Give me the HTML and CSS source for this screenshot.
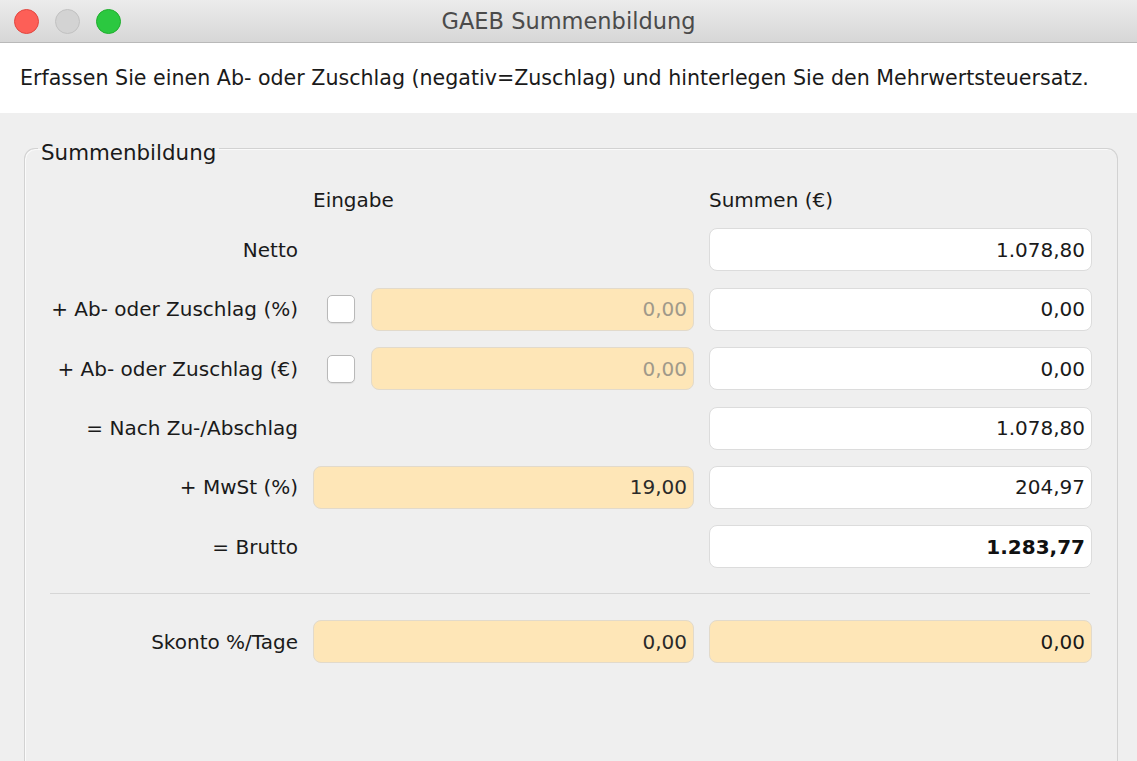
FILE: index.html
```html
<!DOCTYPE html>
<html lang="de">
<head>
<meta charset="utf-8">
<title>GAEB Summenbildung</title>
<link rel="stylesheet" href="styles.css">
</head>
<body>
<div class="window">
  <div class="titlebar">
    <div class="lights">
      <span class="light red"></span>
      <span class="light gray"></span>
      <span class="light green"></span>
    </div>
    <div class="title">GAEB Summenbildung</div>
    <div class="spacer"></div>
  </div>
  <div class="desc">Erfassen Sie einen Ab- oder Zuschlag (negativ=Zuschlag) und hinterlegen Sie den Mehrwertsteuersatz.</div>
  <div class="content">
    <fieldset class="group">
      <legend>Summenbildung</legend>
      <div class="grid">
        <div class="hdr eingabe">Eingabe</div>
        <div class="hdr summen">Summen (€)</div>

        <div class="lbl">Netto</div>
        <div class="field sum">1.078,80</div>

        <div class="lbl">+ Ab- oder Zuschlag (%)</div>
        <div class="cb"></div>
        <div class="field inp disabled">0,00</div>
        <div class="field sum">0,00</div>

        <div class="lbl">+ Ab- oder Zuschlag (€)</div>
        <div class="cb"></div>
        <div class="field inp disabled">0,00</div>
        <div class="field sum">0,00</div>

        <div class="lbl">= Nach Zu-/Abschlag</div>
        <div class="field sum">1.078,80</div>

        <div class="lbl">+ MwSt (%)</div>
        <div class="field inp wide">19,00</div>
        <div class="field sum">204,97</div>

        <div class="lbl">= Brutto</div>
        <div class="field sum bold">1.283,77</div>

        <div class="sep"></div>

        <div class="lbl">Skonto %/Tage</div>
        <div class="field inp wide">0,00</div>
        <div class="field sum orange">0,00</div>
      </div>
    </fieldset>
  </div>
</div>
</body>
</html>
```
FILE: styles.css
```css
html, body {
  margin: 0;
  padding: 0;
  height: 761px;
  overflow: hidden;
}
body {
  background: #efefef;
  font-family: "DejaVu Sans", Verdana, sans-serif;
  font-size: 20px;
  color: #1a1a1a;
}
.window {
  display: flex;
  flex-direction: column;
  height: 761px;
}
.titlebar {
  flex-shrink: 0;
  height: 42px;
  border-bottom: 1px solid #b9b9b9;
  background: linear-gradient(#ececec, #d7d7d7);
  display: grid;
  grid-template-columns: 1fr auto 1fr;
  align-items: center;
}
.lights {
  display: flex;
  gap: 16px;
  padding-left: 14px;
}
.light {
  width: 23px;
  height: 23px;
  border-radius: 50%;
  border: 1px solid transparent;
}
.light.red { background: #fd5f57; border-color: #e2463f; }
.light.gray { background: #d3d3d3; border-color: #c1c1c1; }
.light.green { background: #2bc840; border-color: #1fae2d; }
.title {
  font-size: 22.5px;
  color: #4b4b4b;
  line-height: 26px;
}
.desc {
  flex-shrink: 0;
  height: 70px;
  background: #fff;
  display: flex;
  align-items: center;
  padding-left: 20px;
  font-size: 20.6px;
  color: #1a1a1a;
}
.content {
  flex: 1;
  min-height: 0;
  display: flex;
  flex-direction: column;
  padding: 18px 19px 0 24px;
}
.group {
  flex: 1;
  min-height: 0;
  margin: 0;
  padding: 23px 24px 0 25px;
  border: 1px solid #d2d2d2;
  border-bottom: 0;
  border-radius: 11px 11px 0 0;
  box-shadow: inset 1px 1px 0 #fafafa;
}
.group legend {
  margin-left: -12px;
  padding: 10px 3px 0 3px;
  font-size: 21.4px;
  line-height: 24px;
  color: #1a1a1a;
}
.grid {
  display: grid;
  grid-template-columns: 248px 43px 323px 383px;
  column-gap: 15px;
  row-gap: 16.4px;
  align-items: center;
}
.hdr {
  line-height: 24px;
}
.eingabe { grid-column: 2 / 4; }
.summen { grid-column: 4; }
.lbl {
  grid-column: 1;
  text-align: right;
  white-space: nowrap;
}
.field {
  height: 43px;
  box-sizing: border-box;
  border-radius: 8px;
  display: flex;
  align-items: center;
  justify-content: flex-end;
  padding-right: 6px;
  white-space: nowrap;
}
.sum {
  grid-column: 4;
  background: #fff;
  border: 1px solid #dcdcdc;
}
.inp {
  grid-column: 3;
  background: #fee6b7;
  border: 1px solid #e2dacb;
  color: #2a2a2a;
}
.inp.wide { grid-column: 2 / 4; }
.inp.disabled { color: #a0998a; }
.sum.orange {
  background: #fee6b7;
  border-color: #e2dacb;
}
.bold { font-weight: bold; color: #111; }
.cb {
  grid-column: 2;
  justify-self: end;
  margin-right: 1px;
  width: 28px;
  height: 28px;
  box-sizing: border-box;
  background: #fff;
  border: 1px solid #b9b9b9;
  border-radius: 5px;
  box-shadow: 0 1px 1px rgba(0,0,0,0.08);
}
.sep {
  grid-column: 1 / -1;
  height: 1px;
  background: #d6d6d6;
  margin: 8px 2px 10px 0;
}
```
